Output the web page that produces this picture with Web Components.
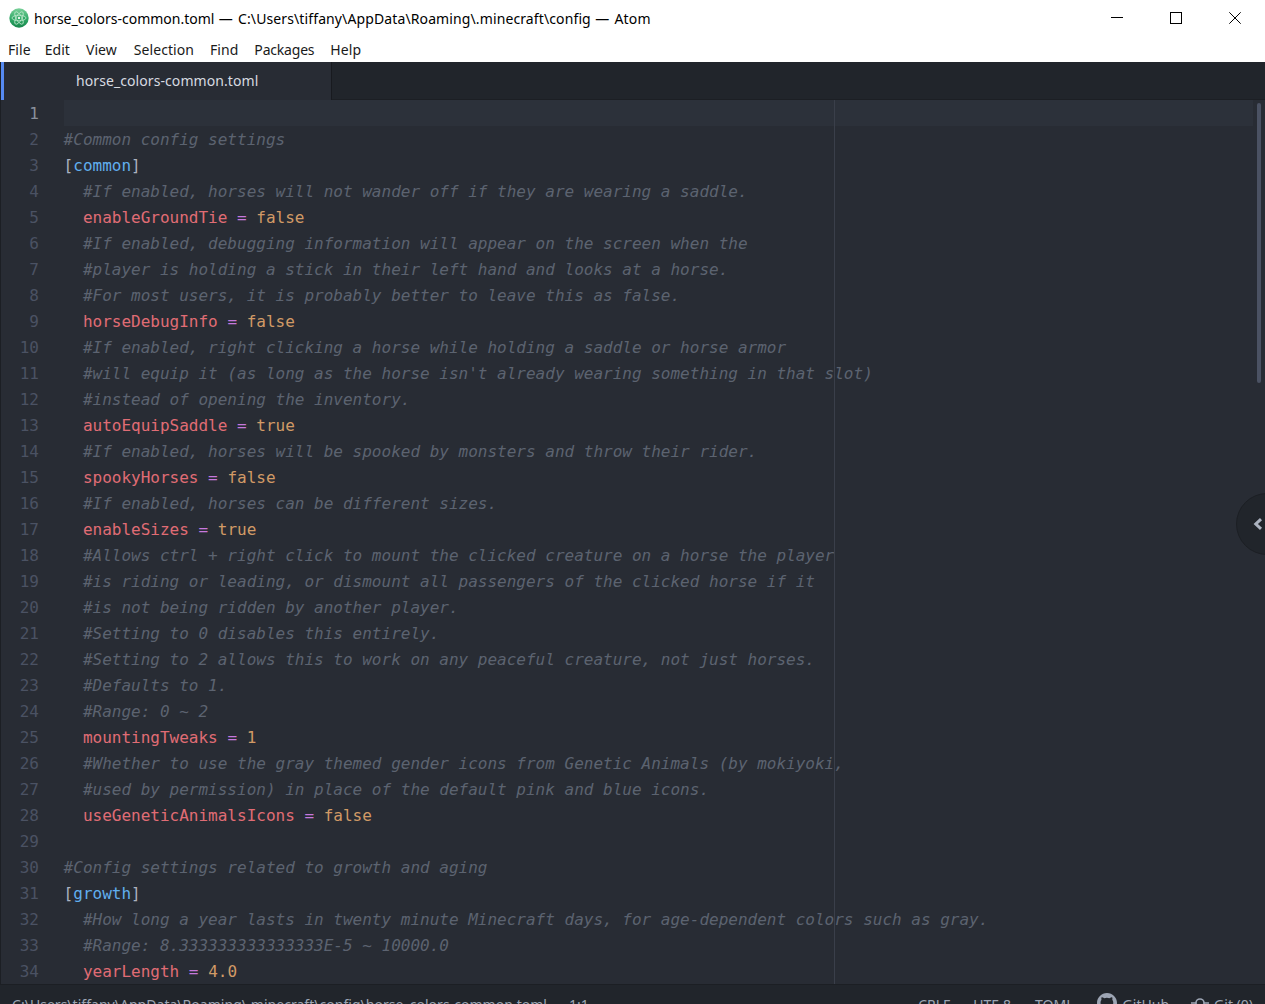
<!DOCTYPE html>
<html><head><meta charset="utf-8">
<style>
html,body{margin:0;padding:0;height:100%;overflow:hidden;background:#fff}
body{font-family:"Noto Sans","Open Sans",sans-serif}
atom-window{height:1004px}
.d{letter-spacing:.75px}.p{letter-spacing:.115px}.a{letter-spacing:.2px}
</style></head><body>
<atom-window>
  <title-bar>horse_colors-common.toml<span class="d"> — </span><span class="p">C:\Users\tiffany\AppData\Roaming\.minecraft\config</span><span class="d"> — </span><span class="a">Atom</span></title-bar>
  <menu-bar></menu-bar>
  <tab-bar>horse_colors-common.toml</tab-bar>
  <text-editor></text-editor>
  <status-bar></status-bar>
</atom-window>
<script>
function shadow(el,html){el.attachShadow({mode:'open'}).innerHTML=html}
customElements.define('atom-window',class extends HTMLElement{connectedCallback(){shadow(this,`<style>:host{display:flex;flex-direction:column;overflow:hidden;position:relative}</style><slot></slot>`)}});
customElements.define('title-bar',class extends HTMLElement{connectedCallback(){shadow(this,`<style>
:host{display:flex;align-items:center;height:36px;flex:none;background:#fff;color:#000;font:14px/20px "Noto Sans",sans-serif;padding-left:9px}
.logo{width:20px;height:20px;margin-right:5px;flex:none}
.t{flex:1;white-space:pre;padding-top:2px}
.b{width:59px;height:36px;display:flex;align-items:center;justify-content:center}
.c{display:flex;margin-right:1px}
svg{display:block}
</style>
<svg class="logo" viewBox="0 0 20 20"><defs><linearGradient id="g" x1="0" y1="0" x2="0" y2="1"><stop offset="0" stop-color="#7ad19a"/><stop offset=".55" stop-color="#2fa866"/><stop offset="1" stop-color="#17864c"/></linearGradient></defs><circle cx="10" cy="10" r="9.7" fill="url(#g)"/><g fill="none" stroke="#bfe8cd" stroke-width=".8"><ellipse cx="10" cy="10" rx="7" ry="2.8" transform="rotate(60 10 10)"/><ellipse cx="10" cy="10" rx="7" ry="2.8" transform="rotate(-60 10 10)"/><ellipse cx="10" cy="10" rx="7" ry="2.8"/></g><circle cx="10" cy="10" r="1.2" fill="#e6f7ec"/></svg>
<span class="t"><slot></slot></span>
<div class="c">
<div class="b"><svg width="12" height="12" viewBox="0 0 12 12"><path d="M0 5.5h12" stroke="#000" stroke-width="1"/></svg></div>
<div class="b"><svg width="12" height="12" viewBox="0 0 12 12"><rect x=".5" y=".5" width="11" height="11" fill="none" stroke="#000"/></svg></div>
<div class="b"><svg width="12" height="12" viewBox="0 0 12 12"><path d="M.3.3l11.4 11.4M11.7.3L.3 11.7" stroke="#000" stroke-width="1"/></svg></div>
</div>`)}});
customElements.define('menu-bar',class extends HTMLElement{connectedCallback(){
const items=[['File',14,.06],['Edit',16,.06],['View',17,.06],['Selection',16,.06],['Find',16,.06],['Packages',16,-.2],['Help',0,.06]];
shadow(this,`<style>
:host{display:flex;align-items:center;height:26px;flex:none;background:#fff;color:#1a1a1a;font:14px/20px "Noto Sans",sans-serif;padding-left:8px}
span{display:block;padding-top:2px}
</style>${items.map(i=>`<span style="margin-right:${i[1]}px;letter-spacing:${i[2]}px">${i[0]}</span>`).join('')}`)}});
customElements.define('tab-bar',class extends HTMLElement{connectedCallback(){shadow(this,`<style>
:host{display:flex;height:38px;flex:none;background:#21252b;border-bottom:1px solid #1c1f24;box-sizing:border-box;border-left:1px solid #1c1f24}
.tab{width:328px;margin-left:3px;background:#282c34;color:#d7dae0;font:14px/37px "Noto Sans",sans-serif;letter-spacing:.08px;padding-left:72px;box-sizing:border-box;border-right:1px solid #181a1f;position:relative;margin-bottom:-1px;white-space:pre}
.tab::before{content:"";position:absolute;left:-3px;top:0;bottom:0;width:3px;background:#568af2}
</style><div class="tab"><slot></slot></div>`)}});
const L=[
[''],
['c','#Common config settings'],
['s','common'],
['c','  #If enabled, horses will not wander off if they are wearing a saddle.'],
['k','enableGroundTie','false'],
['c','  #If enabled, debugging information will appear on the screen when the'],
['c','  #player is holding a stick in their left hand and looks at a horse.'],
['c','  #For most users, it is probably better to leave this as false.'],
['k','horseDebugInfo','false'],
['c','  #If enabled, right clicking a horse while holding a saddle or horse armor'],
['c',"  #will equip it (as long as the horse isn't already wearing something in that slot)"],
['c','  #instead of opening the inventory.'],
['k','autoEquipSaddle','true'],
['c','  #If enabled, horses will be spooked by monsters and throw their rider.'],
['k','spookyHorses','false'],
['c','  #If enabled, horses can be different sizes.'],
['k','enableSizes','true'],
['c','  #Allows ctrl + right click to mount the clicked creature on a horse the player'],
['c','  #is riding or leading, or dismount all passengers of the clicked horse if it'],
['c','  #is not being ridden by another player.'],
['c','  #Setting to 0 disables this entirely.'],
['c','  #Setting to 2 allows this to work on any peaceful creature, not just horses.'],
['c','  #Defaults to 1.'],
['c','  #Range: 0 ~ 2'],
['k','mountingTweaks','1'],
['c','  #Whether to use the gray themed gender icons from Genetic Animals (by mokiyoki,'],
['c','  #used by permission) in place of the default pink and blue icons.'],
['k','useGeneticAnimalsIcons','false'],
[''],
['c','#Config settings related to growth and aging'],
['s','growth'],
['c','  #How long a year lasts in twenty minute Minecraft days, for age-dependent colors such as gray.'],
['c','  #Range: 8.333333333333333E-5 ~ 10000.0'],
['k','yearLength','4.0']
];
const esc=s=>s.replace(/&/g,'&amp;').replace(/</g,'&lt;');
function row(l){
 if(l[0]==='c')return `<span class="cm">${esc(l[1])}</span>`;
 if(l[0]==='s')return `<span class="br">[</span><span class="sec">${l[1]}</span><span class="br">]</span>`;
 if(l[0]==='k')return `  <span class="key">${l[1]}</span> <span class="eq">=</span> <span class="val">${l[2]}</span>`;
 return '';
}
customElements.define('text-editor',class extends HTMLElement{connectedCallback(){shadow(this,`<style>
:host{display:block;flex:none;height:885px;position:relative;overflow:hidden;background:#282c34;font:16px/28px "DejaVu Sans Mono",monospace;border-left:1px solid #1c1f24;border-bottom:1px solid #1c1f24;box-sizing:border-box}
.wrap{display:flex}
.gutter{width:63px;flex:none;color:#4b5263;box-sizing:border-box;padding-right:25px;text-align:right}
.gutter div{height:26px}
.gutter .on{color:#abb2bf;opacity:.75}
.code{flex:1;white-space:pre;min-width:0}
.ln{height:26px;text-indent:-.4px}
.ln.on{background:#2c313a;margin-right:12px}
.cm{color:#5c6370;font-style:italic}
.br{color:#abb2bf}.sec{color:#61afef}.key{color:#e06c75}.eq{color:#c678dd}.val{color:#d19a66}
.guide{position:absolute;left:833px;top:0;bottom:0;width:1px;background:#3a3f4a}
.thumb{position:absolute;left:1256px;top:3px;width:4px;height:280px;border-radius:2px;background:#4b5263}
.toggle{position:absolute;left:1235px;top:393px;width:62px;height:62px;box-sizing:border-box;border-radius:50%;background:#21252b;border:1px solid #1c1f24}
.toggle svg{position:absolute;left:16px;top:24px}
</style>
<div class="wrap"><div class="gutter">${L.map((_,i)=>`<div class="${i?'':'on'}">${i+1}</div>`).join('')}</div>
<div class="code">${L.map((l,i)=>`<div class="ln ${i?'':'on'}">${row(l)}</div>`).join('')}</div></div>
<div class="guide"></div><div class="thumb"></div>
<div class="toggle"><svg width="10" height="12" viewBox="0 0 10 12"><path d="M8 1.200L2.800 6 8 10.800" fill="none" stroke="#abb2bf" stroke-width="3"/></svg></div>`)}});
customElements.define('status-bar',class extends HTMLElement{connectedCallback(){shadow(this,`<style>
:host{display:flex;justify-content:space-between;flex:none;height:26px;background:#21252b;color:#9da5b4;font:14px/18px "Noto Sans",sans-serif;padding:11px 12px 0;box-sizing:border-box;white-space:pre}
.g{display:flex;gap:22px;align-items:flex-start}
.i{display:flex;gap:6px;align-items:flex-start}
.path{letter-spacing:.03px}
svg{display:block;margin-top:-3px}
</style>
<div class="g"><span class="path">C:\\Users\\tiffany\\AppData\\Roaming\\.minecraft\\config\\horse_colors-common.toml</span><span>1:1</span></div>
<div class="g"><span style="margin-right:1px">CRLF</span><span style="margin-right:2px">UTF-8</span><span style="margin-right:1px">TOML</span>
<span class="i"><svg width="20" height="20" viewBox="0 0 16 16"><path fill="#9da5b4" d="M8 0C3.580 0 0 3.580 0 8c0 3.540 2.290 6.530 5.470 7.590.4.070.55-.17.550-.38v-1.340C3.800 14.360 3.220 12.800 3.220 12.800c-.36-.92-.88-1.160-.88-1.160-.73-.5.05-.49.05-.49.8.060 1.220.82 1.220.82.710 1.220 1.870.870 2.330.660.070-.520.280-.870.510-1.070-1.780-.2-3.640-.890-3.640-3.950 0-.870.310-1.590.820-2.150-.080-.2-.360-1.020.080-2.120 0 0 .670-.210 2.200.820a7.600 7.600 0 0 1 4 0c1.530-1.040 2.200-.820 2.200-.820.440 1.100.160 1.920.080 2.120.510.560.820 1.270.820 2.150 0 3.070-1.870 3.750-3.650 3.950.290.250.540.730.540 1.480v2.200c0 .210.150.460.550.380A8 8 0 0 0 16 8c0-4.420-3.580-8-8-8z"/></svg><span>GitHub</span></span>
<span class="i" style="gap:5px"><svg style="margin-top:-1px" width="18" height="16" viewBox="0 0 18 16"><path d="M0 8h5M13 8h5" stroke="#9da5b4" stroke-width="1.600"/><circle cx="9" cy="8" r="4" fill="none" stroke="#9da5b4" stroke-width="1.600"/></svg><span>Git (0)</span></span></div>`)}});
</script>
</body></html>
